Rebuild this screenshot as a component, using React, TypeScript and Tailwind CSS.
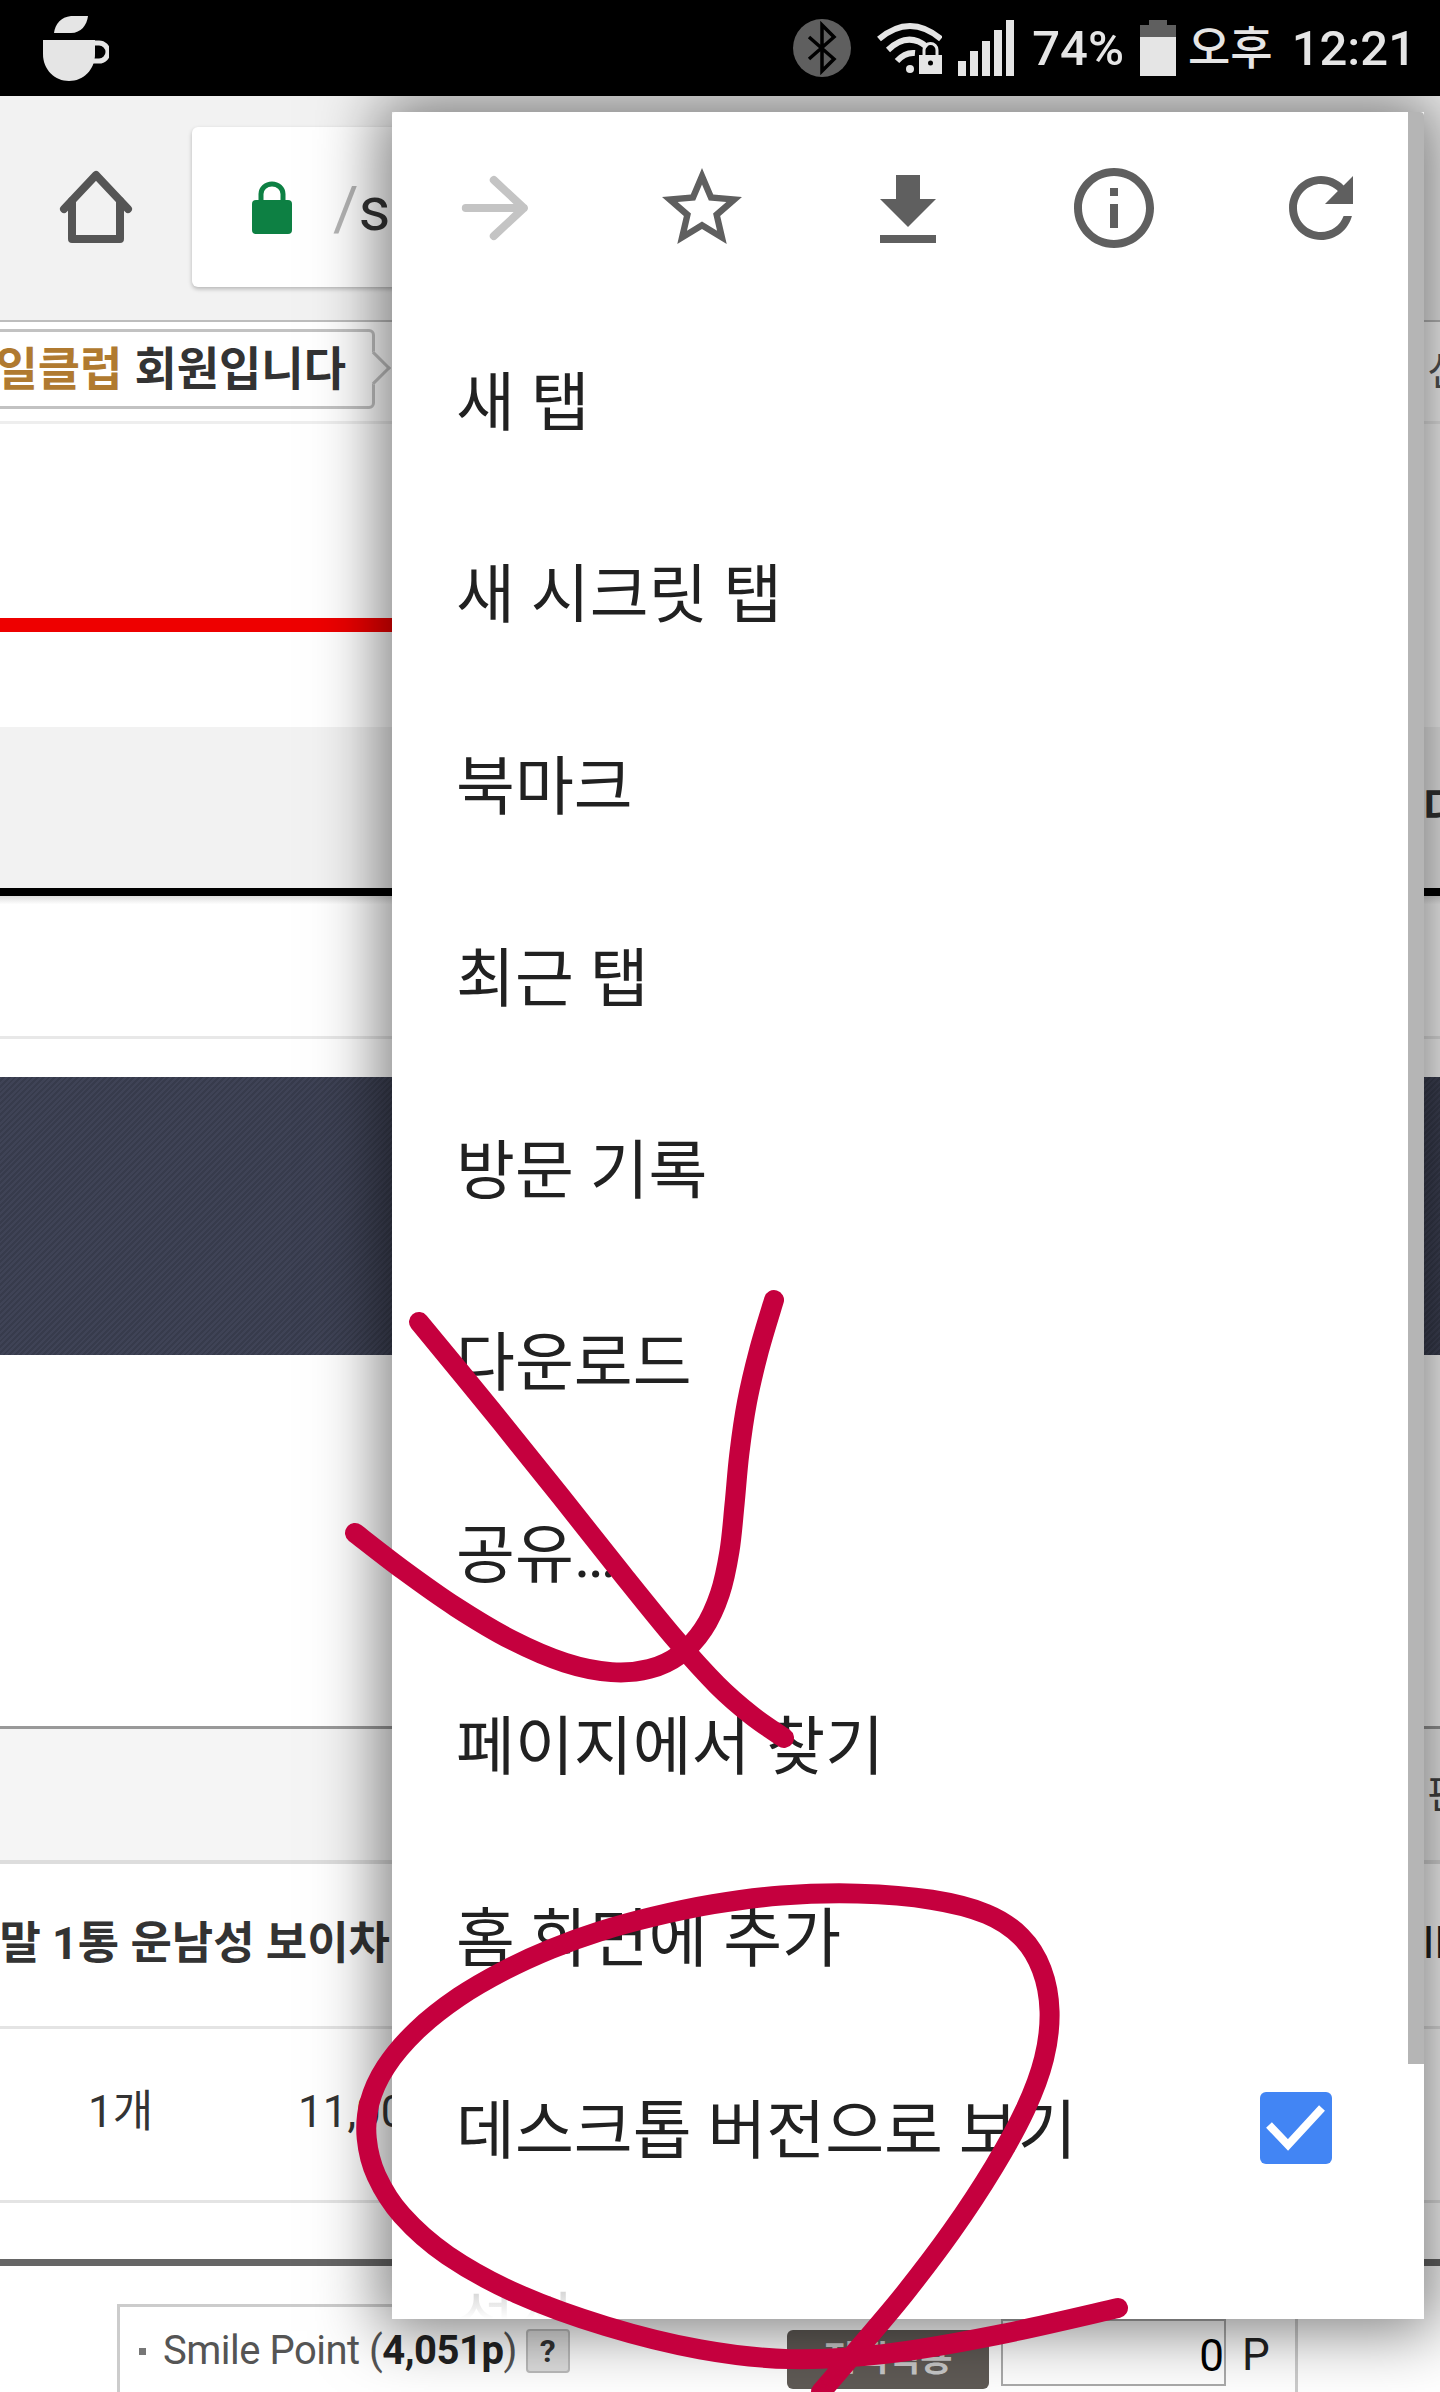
import React from "react";

const menuItems = [
  "새 탭",
  "새 시크릿 탭",
  "북마크",
  "최근 탭",
  "방문 기록",
  "다운로드",
  "공유…",
  "페이지에서 찾기",
  "홈 화면에 추가",
];

type Pt = [number, number];

// 손으로 그린 빨간 표시 (스크린샷 위에 펜으로 그은 선)
const strokes: Pt[][] = [
  [[419, 1322], [491, 1408], [568, 1504], [625, 1579], [683, 1651], [721, 1694], [752, 1719], [784, 1738]],
  [
    [774, 1300], [757, 1351], [744, 1401], [738, 1454], [734, 1508], [732, 1551], [725, 1597], [706, 1636], [683, 1660],
    [652, 1674], [618, 1678], [568, 1671], [514, 1646], [453, 1608], [399, 1569], [355, 1533],
  ],
  [
    [821, 2392], [858, 2347], [904, 2298], [950, 2242], [1005, 2151], [1030, 2110], [1050, 2057], [1058, 2011], [1047, 1962],
    [1027, 1932], [995, 1910], [950, 1896], [858, 1889], [766, 1892], [720, 1902], [643, 1917], [597, 1930], [551, 1947],
    [505, 1968], [459, 1993], [410, 2026], [376, 2072], [364, 2102], [361, 2136], [370, 2177], [390, 2212], [436, 2258],
    [505, 2296], [597, 2330], [720, 2358], [780, 2366], [871, 2362], [995, 2340], [1118, 2308],
  ],
];

// 점 간격이 고르지 않아 생기는 꺾임을 완화
function relax(pts: Pt[]): Pt[] {
  return pts.map((p, i) => {
    if (i === 0 || i === pts.length - 1) return p;
    const a = pts[i - 1];
    const b = pts[i + 1];
    return [(a[0] + 2 * p[0] + b[0]) / 4, (a[1] + 2 * p[1] + b[1]) / 4];
  });
}

// Catmull-Rom -> cubic bezier
function smooth(pts: Pt[]) {
  let d = `M${pts[0][0]} ${pts[0][1]}`;
  for (let i = 0; i < pts.length - 1; i++) {
    const p0 = pts[Math.max(i - 1, 0)];
    const p1 = pts[i];
    const p2 = pts[i + 1];
    const p3 = pts[Math.min(i + 2, pts.length - 1)];
    const c1x = p1[0] + (p2[0] - p0[0]) / 6;
    const c1y = p1[1] + (p2[1] - p0[1]) / 6;
    const c2x = p2[0] - (p3[0] - p1[0]) / 6;
    const c2y = p2[1] - (p3[1] - p1[1]) / 6;
    d += ` C${c1x} ${c1y} ${c2x} ${c2y} ${p2[0]} ${p2[1]}`;
  }
  return d;
}

function StatusBar() {
  return (
    <div className="relative z-20 flex h-24 items-center bg-black pl-[43px] text-[#e5e5e5]">
      <svg width="66" height="65" viewBox="0 0 66 65" fill="#e5e5e5">
        <path d="M11 17C12 8 18 1 28 0L45 0C44 9 38 17 28 17Z" />
        <path d="M0 24H52V38C52 54 40 65 26 65C12 65 0 54 0 38Z" />
        <path d="M50 27h6a9 9 0 0 1 0 18h-8" fill="none" stroke="#e5e5e5" strokeWidth="5" />
      </svg>
      <svg className="ml-auto" width="58" height="58" viewBox="0 0 58 58">
        <circle cx="29" cy="29" r="29" fill="#5f5f5f" />
        <path d="M16 18L41 40L29 52V6L41 18L16 40" fill="none" stroke="#000" strokeWidth="3.5" />
      </svg>
      <svg className="ml-[26px]" width="65" height="52" viewBox="0 0 65 52" fill="none" stroke="#e5e5e5">
        <path d="M2 17Q33 -9 64 17" strokeWidth="6" />
        <path d="M11 28Q31 9 50 25" strokeWidth="6" />
        <path d="M20 39Q28 30 38 31" strokeWidth="6" />
        <circle cx="33" cy="47" r="4" fill="#e5e5e5" stroke="none" />
        <rect x="42" y="33" width="23" height="19" fill="#e5e5e5" stroke="none" />
        <path d="M47 33v-5a6 6 0 0 1 13 0v5" strokeWidth="3" />
        <circle cx="53.500" cy="41" r="2.500" fill="#000" stroke="none" />
      </svg>
      <svg className="ml-4" width="56" height="56" viewBox="0 0 56 56" fill="#e5e5e5">
        <rect x="0" y="41" width="8" height="15" />
        <rect x="12" y="31" width="8" height="25" />
        <rect x="24" y="21" width="8" height="35" />
        <rect x="36" y="10" width="8" height="46" />
        <rect x="48" y="0" width="8" height="56" />
      </svg>
      <span className="ml-[18px] text-[49px] leading-none font-medium">74%</span>
      <div className="ml-[16px] flex h-14 w-9 flex-col items-center">
        <div className="h-[5px] w-[18px] bg-[#5f5f5f]" />
        <div className="h-3 w-9 bg-[#5f5f5f]" />
        <div className="w-9 flex-1 bg-[#e5e5e5]" />
      </div>
      <span className="ml-3 text-[46px] leading-none font-medium">오후</span>
      <span className="mr-[24px] ml-[19px] text-[49px] leading-none font-medium">12:21</span>
    </div>
  );
}

function PageBehind() {
  return (
    <div className="flex flex-col">
      {/* 주소창 */}
      <div className="flex h-[226px] items-center border-b-2 border-[#bdbdbd] bg-[#f2f2f2] pb-[2px]">
        <svg className="ml-12" width="96" height="96" viewBox="0 0 96 96" fill="none" stroke="#555" strokeWidth="8" strokeLinecap="round" strokeLinejoin="round">
          <path d="M16 50L48 16L80 50" />
          <path d="M24 42V80H72V42" />
        </svg>
        <div className="ml-12 flex h-40 w-[820px] items-center rounded-md bg-white pl-[60px] shadow-[0_2px_4px_rgba(0,0,0,0.25)]">
          <svg width="40" height="53" viewBox="0 0 40 53" fill="#0d8043">
            <rect x="0" y="19" width="40" height="34" rx="4" />
            <path d="M9 20V13a11 10 0 0 1 22 0v7" fill="none" stroke="#0d8043" strokeWidth="5" />
          </svg>
          <span className="ml-[41px] pt-1 text-[62px] leading-none text-[#b5b5b5]">/</span>
          <span className="pt-1 text-[62px] leading-none text-[#333]">s.</span>
        </div>
      </div>

      {/* 스마일클럽 말풍선 */}
      <div className="flex h-[102px] items-center justify-between border-b-[3px] border-[#eee] bg-white">
        <div className="relative -ml-5 mb-[6px] flex h-20 w-[395px] items-center justify-end rounded-md border-[3px] border-[#c2c2c2] pr-[26px] whitespace-nowrap">
          <span className="text-[46px] leading-none font-bold text-[#b07a30]">스마일클럽</span>
          <span className="ml-3 text-[46px] leading-none font-bold text-[#333]">회원입니다</span>
          <div className="absolute top-[24px] -right-[14px] h-6 w-6 rotate-45 border-t-[3px] border-r-[3px] border-[#c2c2c2] bg-white" />
        </div>
        <span className="-mr-6 text-[40px] leading-none text-[#555]">선</span>
      </div>

      <div className="h-[194px] bg-white" />
      <div className="h-[14px] w-[1000px] bg-[#ee0000]" />
      <div className="h-[95px] bg-white" />

      <div className="flex h-[161px] items-center justify-end bg-[#f2f2f2]">
        <span className="-mr-6 text-[44px] leading-none font-bold text-[#333]">대</span>
      </div>
      <div className="h-2 bg-black" />
      <div className="h-[140px] bg-gradient-to-b from-[#dedede] from-0% to-white to-[6%]" />
      <div className="h-[3px] bg-[#e8e8e8]" />
      <div className="h-[38px] bg-white" />

      <div className="h-[278px] bg-[#3b4054] bg-[repeating-linear-gradient(135deg,#3f4356_0px,#3f4356_2px,#373b4c_2px,#373b4c_4px)]" />

      <div className="h-[371px] bg-white" />
      <div className="h-[3px] bg-[#999]" />
      <div className="flex h-[131px] items-center justify-end bg-[#f5f5f5]">
        <span className="-mr-6 text-[40px] leading-none text-[#444]">판</span>
      </div>
      <div className="h-1 bg-[#ddd]" />

      {/* 상품 행 */}
      <div className="flex h-[162px] items-center justify-between bg-white pb-1 whitespace-nowrap">
        <div className="flex w-[390px] justify-end overflow-hidden">
          <span className="text-[45px] leading-none font-bold text-[#333]">말 1통 운남성 보이차</span>
        </div>
        <span className="-mr-[33px] text-[44px] leading-none text-[#222]">IM</span>
      </div>
      <div className="h-[3px] bg-[#e4e4e4]" />
      <div className="flex h-[171px] items-center bg-white pb-[6px] pl-[88px] text-[44px] leading-none text-[#333]">
        <span className="w-[210px]">1개</span>
        <span>11,000</span>
      </div>
      <div className="h-[3px] bg-[#e4e4e4]" />
      <div className="h-[56px] bg-white" />
      <div className="h-[7px] bg-[#666]" />
      <div className="h-[38px] bg-white" />

      {/* 포인트 박스 */}
      <div className="ml-[117px] flex h-[88px] w-[1181px] border-t-[3px] border-r-[3px] border-l-[3px] border-[#ccc] bg-white">
        <div className="flex h-[85px] w-[667px] items-center pt-[3px]">
          <span className="ml-[19px] h-[7px] w-[7px] bg-[#777]" />
          <span className="ml-[17px] text-[40px] leading-none tracking-[-0.5px] text-[#555]">
            Smile Point (<b className="text-[#222]">4,051p</b>)
          </span>
          <span className="ml-[9px] flex h-11 w-11 items-center justify-center rounded border-2 border-[#bbb] bg-[#ddd] text-[32px] leading-none font-bold text-[#333]">
            ?
          </span>
        </div>
        <div className="mt-[23px] flex h-[59px] w-[202px] items-center justify-center rounded-md bg-[#5f5a55] text-[35px] leading-none font-bold text-[#c8c8c8]">
          전액적용
        </div>
        <div className="mt-3 ml-3 flex h-[67px] w-[225px] items-center justify-end border-2 border-[#aaa] pt-[6px] text-[44px] leading-none text-black">
          0
        </div>
        <span className="mt-[26px] ml-4 text-[44px] leading-none text-[#222]">P</span>
      </div>
    </div>
  );
}

function ChromeMenu() {
  return (
    <div className="absolute top-[112px] left-[392px] z-10 h-[2207px] w-[1032px] overflow-hidden rounded-[4px] bg-white">
      <div className="flex h-[192px] items-center">
        <div className="flex w-[206.4px] justify-center">
          <svg width="96" height="96" viewBox="0 0 24 24" fill="none" stroke="#c4c4c4" strokeWidth="2" strokeLinecap="round" strokeLinejoin="round">
            <path d="M4.700 12H19.200M11.700 5L19.200 12L11.700 19" />
          </svg>
        </div>
        <div className="flex w-[206.4px] justify-center">
          <svg width="96" height="96" viewBox="0 0 24 24" fill="#5f5f5f">
            <path d="M22 9.24l-7.19-.62L12 2 9.19 8.63 2 9.24l5.46 4.73L5.82 21 12 17.27 18.18 21l-1.63-7.03L22 9.24zM12 15.4l-3.76 2.27 1-4.28-3.32-2.88 4.38-.38L12 6.1l1.71 4.04 4.38.38-3.32 2.88 1 4.28L12 15.4z" />
          </svg>
        </div>
        <div className="flex w-[206.4px] justify-center">
          <svg className="mt-[6px]" width="96" height="96" viewBox="0 0 24 24" fill="#5f5f5f">
            <path d="M19 9h-4V3H9v6H5l7 7 7-7zM5 18v2h14v-2H5z" />
          </svg>
        </div>
        <div className="flex w-[206.4px] justify-center">
          <svg width="96" height="96" viewBox="0 0 24 24" fill="#5f5f5f">
            <path d="M11 7h2v2h-2zm0 4h2v6h-2zm1-9C6.48 2 2 6.48 2 12s4.48 10 10 10 10-4.48 10-10S17.52 2 12 2zm0 18c-4.41 0-8-3.59-8-8s3.59-8 8-8 8 3.59 8 8-3.59 8-8 8z" />
          </svg>
        </div>
        <div className="flex w-[206.4px] justify-center">
          <svg width="96" height="96" viewBox="0 0 24 24" fill="#5f5f5f">
            <path d="M17.65 6.35C16.2 4.9 14.21 4 12 4c-4.42 0-7.99 3.58-7.99 8s3.57 8 7.99 8c3.73 0 6.84-2.55 7.73-6h-2.08c-.82 2.33-3.04 4-5.65 4-3.31 0-6-2.69-6-6s2.69-6 6-6c1.66 0 3.14.69 4.22 1.78L13 11h7V4l-2.35 2.35z" />
          </svg>
        </div>
      </div>

      {menuItems.map((label) => (
        <div key={label} className="flex h-[192px] items-center pt-[7px] pl-[64px] text-[64px] leading-none text-[#212121]">
          {label}
        </div>
      ))}

      <div className="flex h-[192px] items-center justify-between pr-[92px] pl-[64px] text-[64px] leading-none text-[#212121]">
        <span className="pt-[7px]">데스크톱 버전으로 보기</span>
        <div className="flex h-[72px] w-[72px] items-center justify-center rounded-md bg-[#4285f4]">
          <svg width="72" height="72" viewBox="0 0 72 72" fill="none" stroke="#fff" strokeWidth="8">
            <path d="M9 33L28 53L62 16" />
          </svg>
        </div>
      </div>

      <div className="flex h-[192px] items-center pt-[7px] pl-[64px] text-[64px] leading-none text-[#212121]">설정</div>

      {/* 하단 페이드, 스크롤바 */}
      <div className="absolute right-0 bottom-0 left-0 h-[60px] bg-gradient-to-b from-white/60 to-white" />
      <div className="absolute top-0 right-0 h-[1952px] w-4 bg-[#b5b5b5]" />
    </div>
  );
}

export default function App() {
  return (
    <div className="relative h-[2392px] w-[1440px] overflow-hidden bg-white font-['Roboto','Noto_Sans_CJK_KR',sans-serif]">
      <StatusBar />
      <PageBehind />
      {/* 메뉴 그림자: 왼쪽으로 넓게 번진다 */}
      <div className="absolute top-[112px] left-[392px] z-[5] h-[2207px] w-[1032px] shadow-[0_0_60px_12px_rgba(0,0,0,0.5)]" />
      <ChromeMenu />
      <svg className="absolute top-0 left-0 z-30" width="1440" height="2392" viewBox="0 0 1440 2392" fill="none" stroke="#c5003e" strokeWidth="20" strokeLinecap="round" strokeLinejoin="round">
        {strokes.map((pts) => (
          <path key={pts[0].join()} d={smooth(relax(relax(pts)))} />
        ))}
      </svg>
    </div>
  );
}
